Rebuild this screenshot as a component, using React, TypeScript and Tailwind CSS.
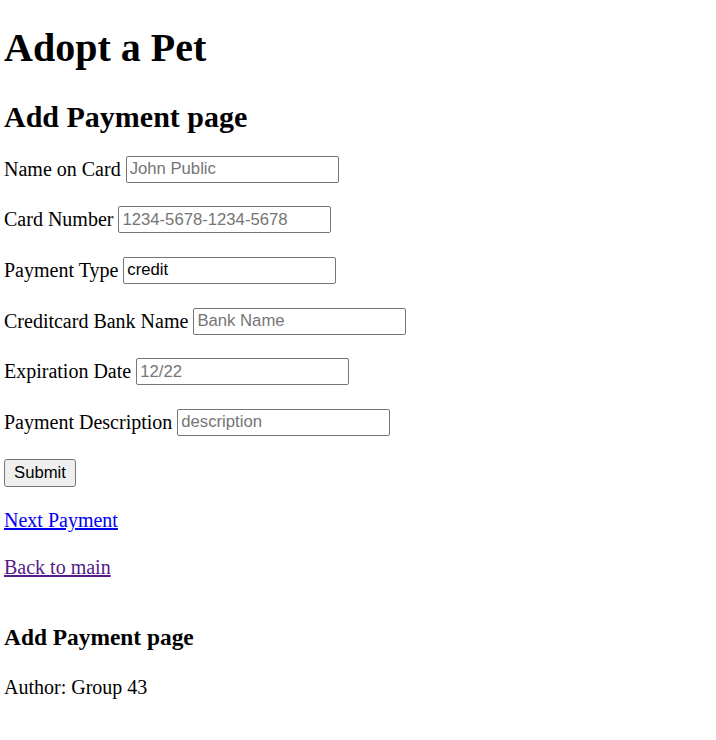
import { useState } from "react";

const fields = [
  { label: "Name on Card", placeholder: "John Public", value: "" },
  { label: "Card Number", placeholder: "1234-5678-1234-5678", value: "" },
  { label: "Payment Type", placeholder: "", value: "credit" },
  { label: "Creditcard Bank Name", placeholder: "Bank Name", value: "" },
  { label: "Expiration Date", placeholder: "12/22", value: "" },
  { label: "Payment Description", placeholder: "description", value: "" },
];

export default function App() {
  const [values, setValues] = useState(fields.map(f => f.value));

  return (
    <div className="min-h-[740px] bg-white pl-[4px] pt-[25px] text-black font-['Liberation_Serif',serif] text-[20px]">
      <h1 className="text-[40px] font-bold leading-[46px]">Adopt a Pet</h1>
      <h2 className="mt-[29px] text-[30px] font-bold leading-[34px]">Add Payment page</h2>

      <form className="mt-[20px]" onSubmit={e => e.preventDefault()}>
        {fields.map((f, i) => (
          <div key={f.label} className="flex h-[30.6px] items-center gap-[5px] mb-[20px]">
            <label className="leading-[23px]">{f.label}</label>
            <input
              type="text"
              value={values[i]}
              placeholder={f.placeholder}
              onChange={e => {
                const next = [...values];
                next[i] = e.target.value;
                setValues(next);
              }}
              className="h-[27px] w-[213px] rounded-[2px] border border-[#767676] px-[3px] font-['Liberation_Sans',Arial,sans-serif] text-[16.7px] text-black placeholder:text-[#757575] outline-none"
            />
          </div>
        ))}
        <div className="flex h-[30.6px] items-center">
          <button
            type="submit"
            className="h-[28px] w-[72px] rounded-[3px] border border-[#767676] bg-[#efefef] font-['Liberation_Sans',Arial,sans-serif] text-[16.7px] text-black"
          >
            Submit
          </button>
        </div>
      </form>

      <p className="mt-[21px] leading-[23px]">
        <a href="#" className="text-[#0000ee] underline">Next Payment</a>
      </p>
      <p className="mt-[24px] leading-[23px]">
        <a href="#" className="text-[#551a8b] underline">Back to main</a>
      </p>

      <h3 className="mt-[45px] text-[23.4px] font-bold leading-[27px]">Add Payment page</h3>
      <p className="mt-[25px] leading-[23px]">Author: Group 43</p>
    </div>
  );
}
